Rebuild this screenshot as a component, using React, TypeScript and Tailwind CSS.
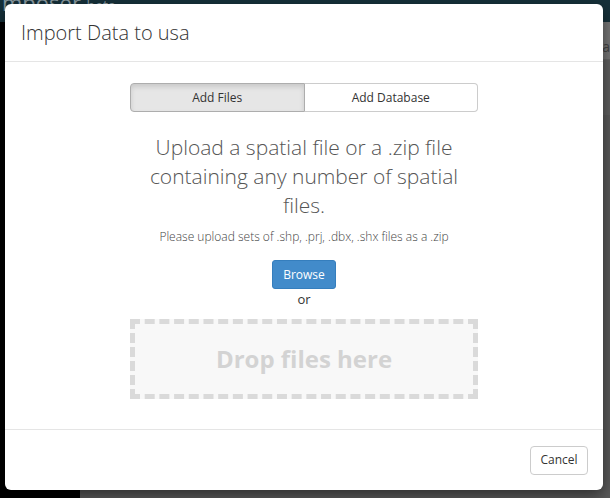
import React from "react";

const font = { fontFamily: '"Open Sans", "Noto Sans", sans-serif' };

const ImportModal: React.FC = () => {
  return (
    <div className="absolute left-[5px] top-[4px] w-[598px] h-[486px] flex flex-col bg-white rounded-[6px] shadow-[0_5px_15px_rgba(0,0,0,0.5)]">
      {/* Header */}
      <div className="h-[58px] shrink-0 flex items-center px-[16px] border-b border-[#e5e5e5]">
        <h4 className="text-[20px] font-light text-[#333] leading-none">Import Data to usa</h4>
      </div>

      {/* Body */}
      <div className="flex-1 flex flex-col items-center pt-[21px]">
        <div className="flex w-[348px] h-[29px] text-[12px] text-[#333]">
          <button className="flex-1 bg-[#e6e6e6] border border-[#adadad] rounded-l-[4px] shadow-[inset_0_3px_5px_rgba(0,0,0,0.125)]">
            Add Files
          </button>
          <button className="flex-1 bg-white border border-l-0 border-[#ccc] rounded-r-[4px]">
            Add Database
          </button>
        </div>

        <h3 className="w-[320px] mt-[21px] text-center text-[21px] leading-[29px] font-light text-[#555]">
          Upload a spatial file or a .zip file containing any number of spatial files.
        </h3>

        <p className="mt-[9px] text-[12px] leading-[16px] font-light text-[#444]">
          Please upload sets of .shp, .prj, .dbx, .shx files as a .zip
        </p>

        <button className="mt-[15px] w-[64px] h-[29px] rounded-[3px] bg-[#428bca] border border-[#357ebd] text-white text-[12px]">
          Browse
        </button>
        <span className="mt-[1px] text-[13px] leading-[18px] text-[#333]">or</span>

        <div className="mt-[11px] w-[348px] h-[80px] flex items-center justify-center bg-[#f8f8f8] border-[5px] border-dashed border-[#dadada]">
          <span className="text-[24px] font-bold text-[#d3d3d3]">Drop files here</span>
        </div>
      </div>

      {/* Footer */}
      <div className="h-[61px] shrink-0 flex items-center justify-end px-[15px] border-t border-[#e5e5e5]">
        <button className="w-[58px] h-[29px] rounded-[4px] border border-[#ccc] bg-white text-[12px] text-[#333]">
          Cancel
        </button>
      </div>
    </div>
  );
};

export default function App() {
  return (
    <div className="relative w-[610px] h-[498px] overflow-hidden bg-black" style={font}>
      {/* Dimmed app behind the modal */}
      <div className="flex flex-col h-full">
        <div className="h-[22px] shrink-0 bg-[#16313a] overflow-hidden">
          <span className="block -mt-[14px] pl-[2px] text-[22px] text-[#8a9aa0]">
            mposer <span className="text-[14px]">beta</span>
          </span>
        </div>
        <div className="flex flex-1">
          <div className="w-[80px] bg-black" />
          <div className="flex-1 flex flex-col bg-[#4e4e4e]">
            <div className="h-[38px] bg-[#777] border-b border-[#666] flex items-end justify-end pr-[0px] pb-[2px] text-[14px] text-[#444]">
              Ma
            </div>
            <div className="h-[55px] bg-[#606060]" />
            <div className="flex-1 bg-[#5a5a5a]" />
          </div>
        </div>
      </div>

      <ImportModal />
    </div>
  );
}
